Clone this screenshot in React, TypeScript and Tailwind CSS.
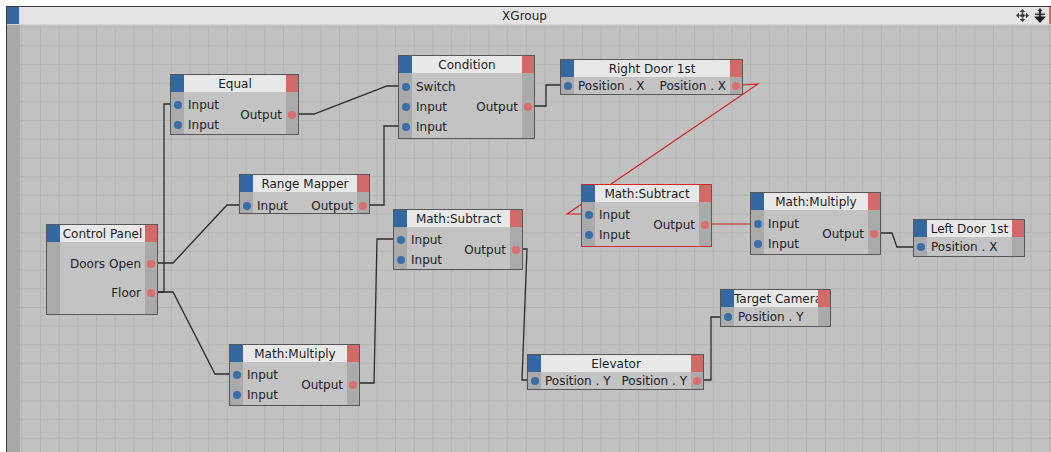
import React from "react";

type N = {
  t: string;
  x: number;
  y: number;
  w: number;
  h: number;
  ins?: string[];
  outs?: string[];
  sel?: boolean;
  gap?: number;
  pt?: number;
};

// canvas origin in page coords
const OX = 20;
const OY = 25;

const nodes: N[] = [
  { t: "Equal", x: 170, y: 74, w: 129, h: 61, ins: ["Input", "Input"], outs: ["Output"], pt: 4 },
  { t: "Condition", x: 398, y: 55, w: 137, h: 84, ins: ["Switch", "Input", "Input"], outs: ["Output"], pt: 2 },
  { t: "Right Door 1st", x: 560, y: 59, w: 183, h: 36, ins: ["Position . X"], outs: ["Position . X"] },
  { t: "Range Mapper", x: 239, y: 174, w: 131, h: 40, ins: ["Input"], outs: ["Output"], pt: 6 },
  { t: "Control Panel", x: 46, y: 224, w: 112, h: 91, outs: ["Doors Open", "Floor"], gap: 9 },
  { t: "Math:Multiply", x: 229, y: 344, w: 131, h: 62, ins: ["Input", "Input"], outs: ["Output"], pt: 2 },
  { t: "Math:Subtract", x: 393, y: 209, w: 130, h: 61, ins: ["Input", "Input"], outs: ["Output"], pt: 3 },
  { t: "Math:Subtract", x: 581, y: 184, w: 131, h: 63, ins: ["Input", "Input"], outs: ["Output"], sel: true, pt: 2 },
  { t: "Math:Multiply", x: 750, y: 192, w: 131, h: 63, ins: ["Input", "Input"], outs: ["Output"], pt: 4 },
  { t: "Left Door 1st", x: 913, y: 219, w: 112, h: 38, ins: ["Position . X"], pt: 1 },
  { t: "Target Camera", x: 720, y: 289, w: 111, h: 38, ins: ["Position . Y"], pt: 1 },
  { t: "Elevator", x: 527, y: 354, w: 177, h: 36, ins: ["Position . Y"], outs: ["Position . Y"] },
];

const wires: number[][][] = [
  [[157, 292], [164, 292], [164, 104], [172, 104]],
  [[157, 292], [173, 292], [215, 374], [230, 374]],
  [[157, 263], [173, 263], [227, 205], [240, 205]],
  [[298, 114], [314, 114], [387, 86], [399, 86]],
  [[369, 205], [384, 205], [384, 126], [399, 126]],
  [[534, 106], [546, 106], [546, 85], [561, 85]],
  [[359, 383], [374, 383], [377, 239], [393, 239]],
  [[522, 249], [527, 249], [522, 380], [528, 380]],
  [[703, 380], [711, 380], [711, 317], [721, 317]],
  [[880, 233], [892, 233], [897, 247], [913, 247]],
];

const redWires: number[][][] = [
  [[742, 85], [758, 84], [567, 214], [581, 214]],
  [[711, 224], [750, 224]],
];

function Rows({ items, gap, dot, align }: { items: string[]; gap?: number; dot?: "in" | "out"; align?: "l" | "r" }) {
  return (
    <div className="flex flex-col justify-center h-full" style={{ gap: gap ?? 0 }}>
      {items.map((s, i) => (
        <div key={i} className="h-[20px] flex items-center justify-center shrink-0">
          {dot ? (
            <span
              className={
                dot === "in"
                  ? "w-[8px] h-[8px] rounded-full bg-[#3a6ea8]"
                  : "w-[8px] h-[8px] rounded-full bg-[#dc6e6e]"
              }
            />
          ) : (
            <span className={align === "r" ? "w-full text-right whitespace-nowrap" : "w-full text-left whitespace-nowrap"}>
              {s}
            </span>
          )}
        </div>
      ))}
    </div>
  );
}

function Node({ n }: { n: N }) {
  const ins = n.ins ?? [];
  const outs = n.outs ?? [];
  const pt = n.pt ?? 0;
  return (
    <div
      className={
        "absolute flex flex-col border " + (n.sel ? "border-[#d72626]" : "border-[#575757]")
      }
      style={{ left: n.x - OX, top: n.y - OY, width: n.w, height: n.h }}
    >
      <div className="flex h-[17px] shrink-0">
        <div className="w-[13px] bg-[#3567a0]" />
        <div className="flex-1 min-w-0 overflow-hidden bg-[#e8e8e8] text-center leading-[17px] pt-[1px] whitespace-nowrap">
          {n.t}
        </div>
        <div className="w-[12px] bg-[#d26a6a]" />
      </div>
      <div className="flex flex-1 min-h-0">
        <div className="w-[13px] bg-[#aaaaaa]" style={{ paddingTop: pt }}>
          <Rows items={ins} dot="in" />
        </div>
        <div className="flex-1 flex justify-between bg-[#c3c3c3] px-[4px]" style={{ paddingTop: pt }}>
          <div className="min-w-0">
            <Rows items={ins} align="l" />
          </div>
          <div className="min-w-0">
            <Rows items={outs} gap={n.gap} align="r" />
          </div>
        </div>
        <div className="w-[12px] bg-[#aaaaaa]" style={{ paddingTop: pt }}>
          <Rows items={outs} gap={n.gap} dot="out" />
        </div>
      </div>
    </div>
  );
}

function MoveIcon() {
  return (
    <svg width="13" height="13" viewBox="0 0 13 13">
      <path d="M6.5 0 L9.2 3 L3.8 3 Z M6.5 13 L9.2 10 L3.8 10 Z M0 6.5 L3 3.8 L3 9.2 Z M13 6.5 L10 3.8 L10 9.2 Z" fill="#3a3a3a" />
      <rect x="5.6" y="3" width="1.8" height="7" fill="#6a6a6a" />
      <rect x="3" y="5.6" width="7" height="1.8" fill="#6a6a6a" />
      <circle cx="6.5" cy="6.5" r="1.6" fill="#2a2a2a" />
    </svg>
  );
}

function PinIcon() {
  return (
    <svg width="12" height="15" viewBox="0 0 12 15">
      <path d="M6 0 L8.6 3 L3.4 3 Z" fill="#2a2a2a" />
      <rect x="4.8" y="2.5" width="2.4" height="8" fill="#2a2a2a" />
      <rect x="1" y="5.5" width="10" height="1.6" fill="#3a3a3a" />
      <path d="M0 8.5 L12 8.5 L6 15 Z" fill="#1f1f1f" />
    </svg>
  );
}

export default function App() {
  return (
    <div className="w-[1051px] h-[452px] overflow-hidden bg-white pl-[6px] pt-[6px] font-['DejaVu_Sans',sans-serif] text-[12px] text-[#1c1c24]">
      <div className="w-[1055px] h-[460px] border-l border-t border-[#3a3a3a] flex flex-col">
        <div className="flex h-[17px] shrink-0 bg-[#e4e4e4]">
          <div className="w-[12px] bg-[#3567a0]" />
          <div className="flex-1 text-center leading-[17px] pt-[1px] pl-[14px]">XGroup</div>
          <div className="flex items-center gap-[5px] pr-[3px]">
            <MoveIcon />
            <PinIcon />
          </div>
          <div className="w-[12px] bg-[#d26a6a]" />
        </div>
        <div className="h-[1px] shrink-0 bg-[#d2d2d2]" />
        <div className="flex flex-1">
          <div className="w-[13px] bg-[#a9a9a9]" />
          <div className="relative flex-1 bg-[#c1c1c1] bg-[linear-gradient(to_right,#b5b5b5_1px,transparent_1px),linear-gradient(to_bottom,#b5b5b5_1px,transparent_1px)] bg-[size:18.7px_18.7px] bg-[position:1.3px_1.7px]">
            <svg className="absolute left-0 top-0 overflow-visible" width="1040" height="430">
              <g transform={`translate(${-OX} ${-OY})`} fill="none">
                {wires.map((w, i) => (
                  <polyline key={i} points={w.map((p) => p.join(",")).join(" ")} stroke="#2b2b2b" strokeWidth="1.3" />
                ))}
                {redWires.map((w, i) => (
                  <polyline key={i} points={w.map((p) => p.join(",")).join(" ")} stroke="#d41c1c" strokeWidth="1.1" />
                ))}
              </g>
            </svg>
            {nodes.map((n, i) => (
              <Node key={i} n={n} />
            ))}
          </div>
        </div>
      </div>
    </div>
  );
}
